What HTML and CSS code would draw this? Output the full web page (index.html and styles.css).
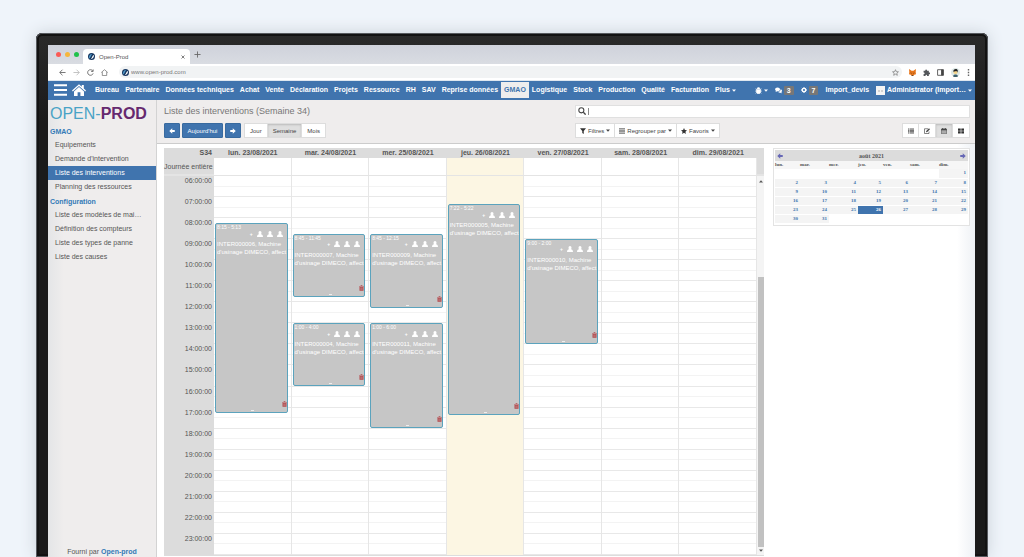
FILE: index.html
```html
<!DOCTYPE html>
<html lang="fr">
<head>
<meta charset="utf-8">
<title>Open-Prod</title>
<link rel="stylesheet" href="styles.css">
</head>
<body>
<svg class="sprite" aria-hidden="true">
  <symbol id="user" viewBox="0 0 12 12"><path d="M6 0a3 3.200 0 0 1 3 3.200c0 1.400-.4 2.500-1 3.200 2.500.6 4 2.200 4 5.600H0c0-3.400 1.500-5 4-5.600-.6-.7-1-1.800-1-3.200A3 3.200 0 0 1 6 0z" fill="currentColor"/></symbol>
  <symbol id="trash" viewBox="0 0 10 12"><path d="M0 2h3l.5-1.500h3L7 2h3v1.200H0zM1 4h8v7.500H1z" fill="currentColor"/><path d="M3.300 5v5M5 5v5M6.700 5v5" stroke="#c6c6c6" stroke-width=".5"/></symbol>
  <symbol id="brand" viewBox="0 0 14 14"><circle cx="7" cy="7" r="7" fill="#17365f"/><path d="M2 11C1 6 4 2 8.500 1.500 6.500 4 6.500 5 5.500 7 4.500 9 3.500 10 2 11z" fill="#4f9ac9"/><path d="M5.200 12.500c4-.5 7-3.500 6.800-8.500-1.500.5-2.500 1.500-3.500 3.500s-1.500 3.500-3.300 5z" fill="#fff"/></symbol>
  <symbol id="left" viewBox="0 0 12 12"><path d="M6.500 .5v3.500H11.500v4H6.500v3.500L.5 6z" fill="currentColor"/></symbol>
  <symbol id="right" viewBox="0 0 12 12"><path d="M5.500 .5v3.500H.5v4h5v3.500L11.500 6z" fill="currentColor"/></symbol>
  <symbol id="caret" viewBox="0 0 8 5"><path d="M0 .5h8L4 4.800z" fill="currentColor"/></symbol>
</svg>

<div class="monitor">
<div class="screen">
  <div class="tabs">
    <span class="dot dot-red"></span><span class="dot dot-yellow"></span><span class="dot dot-green"></span>
    <div class="tab"><svg class="i7"><use href="#brand"/></svg><span>Open-Prod</span>
      <svg class="close" viewBox="0 0 8 8"><path d="M1 1l6 6M7 1L1 7" stroke="#555" stroke-width="1.500"/></svg></div>
    <svg class="i7" viewBox="0 0 8 8"><path d="M4 .5v7M.5 4h7" stroke="#666" stroke-width="1"/></svg>
  </div>
  <div class="address">
    <svg class="i7" viewBox="0 0 8 8"><path d="M7.500 4H1M4 .8L.8 4 4 7.200" fill="none" stroke="#666"/></svg>
    <svg class="i7" viewBox="0 0 8 8"><path d="M.5 4H7M4 .8L7.200 4 4 7.200" fill="none" stroke="#bbb"/></svg>
    <svg class="i7" viewBox="0 0 8 8"><path d="M6.600 2.200A3.200 3.200 0 1 0 7 5M7 .5v2.300H4.700" fill="none" stroke="#666"/></svg>
    <svg class="i7" viewBox="0 0 8 8"><path d="M.3 4L4 .8 7.700 4M1.500 3.500v4h5v-4" fill="none" stroke="#777" stroke-width=".9"/></svg>
    <label class="url"><svg class="i7"><use href="#brand"/></svg><input type="text" value="www.open-prod.com" aria-label="Adresse">
      <svg class="i7" viewBox="0 0 10 10"><path d="M5 1l1.200 2.800 3 .2-2.300 2 .7 3L5 7.400 2.400 9l.7-3L.8 4l3-.2z" fill="none" stroke="#777"/></svg></label>
    <svg class="i7" viewBox="0 0 12 12"><path d="M0 0l4.500 3h3L12 0l-.5 5 .5 4-3 1-1 1.500H4L3 10 0 9l.5-4z" fill="#e8761b"/><path d="M2.500 6l2 1-.5 1.200zM9.500 6l-2 1 .5 1.200zM4.500 10.300h3l-.5 1.200H5z" fill="#35302c"/></svg>
    <svg class="i7" viewBox="0 0 12 12"><path d="M1 3h3C3 .2 7.600.2 6.800 3H10v3c3-.8 3 3.800 0 3v3H7c.6-2.600-3.200-2.600-2.700 0H1V8.500c2.600.5 2.600-3 0-2.600z" fill="#54575b"/></svg>
    <svg class="i7" viewBox="0 0 12 12"><path d="M1 1.200h10v9.600H1z" fill="none" stroke="#444" stroke-width="1.400"/><path d="M7 1h4v10H7z" fill="#444"/></svg>
    <svg class="i9" viewBox="0 0 14 14"><circle cx="7" cy="7" r="7" fill="#dce8e6"/><path d="M3 13c1-4 7-4 8 0-2 1.500-6 1.500-8 0z" fill="#3c5f6c"/><circle cx="7" cy="6.500" r="3" fill="#f3d48a"/><path d="M3.500 6C3 1.500 9 0 10.500 3.500L10 7 8.500 4.500z" fill="#222"/></svg>
    <svg class="kebab" viewBox="0 0 4 10"><path d="M1 0h2v2H1zM1 4h2v2H1zM1 8h2v2H1z" fill="#666"/></svg>
  </div>

  <nav class="navbar">
    <svg class="burger" viewBox="0 0 13 12"><path d="M0 1.300h13M0 6h13M0 10.700h13" stroke="#fff" stroke-width="2"/></svg>
    <svg class="home" viewBox="0 0 14 12"><path d="M7 .3l2.800 2.500V1h2v3.600L14 6.500l-.8.9L7 2 .8 7.400 0 6.500z" fill="#fff"/><path d="M7 3l5 4.400V12H8.400V8.300H5.600V12H2V7.400z" fill="#fff"/></svg>
    <div class="menu">
      <a href="#">Bureau</a><a href="#">Partenaire</a><a href="#">Données techniques</a><a href="#">Achat</a><a href="#">Vente</a><a href="#">Déclaration</a><a href="#">Projets</a><a href="#">Ressource</a><a href="#">RH</a><a href="#">SAV</a><a href="#">Reprise données</a><a href="#" class="current">GMAO</a><a href="#">Logistique</a><a href="#">Stock</a><a href="#">Production</a><a href="#">Qualité</a><a href="#">Facturation</a><a href="#">Plus <svg class="caret"><use href="#caret"/></svg></a>
    </div>
    <div class="account">
      <a href="#" aria-label="Debug"><svg class="i7" viewBox="0 0 12 12"><path d="M3.500 3.500a2.500 2.500 0 0 1 5 0M2.500 4.200h7V9c-1 3.500-6 3.500-7 0zM0 7h12M.8 3l2 1.500M11.200 3l-2 1.500M1 11l2-1.500M11 11L9 9.500" fill="#fff" stroke="#fff"/></svg> <svg class="caret"><use href="#caret"/></svg></a>
      <a href="#"><svg class="i7" viewBox="0 0 14 12"><path d="M5 0c3 0 5 1.600 5 3.800S8 7.500 5 7.500L1 9l1-2.300C-1.500 4.500.5 0 5 0z" fill="#fff"/><path d="M11 3.500c3.500 1 3.800 4 1.700 5.500l1 2.500-3.400-1.200c-2 .3-4-.3-4.800-1.600 3.500 0 5.800-2 5.500-5.200z" fill="#fff"/></svg><span class="badge">3</span></a>
      <a href="#"><svg class="i6" viewBox="0 0 12 12"><circle cx="6" cy="6" r="3.400" fill="none" stroke="#fff" stroke-width="2.600"/><path d="M6 0v2M6 10v2M0 6h2M10 6h2M1.800 1.800l1.400 1.400M8.800 8.800l1.400 1.400M1.800 10.200l1.400-1.400M8.800 3.200l1.400-1.400" stroke="#fff" stroke-width="2"/></svg><span class="badge">7</span></a>
      <a href="#">Import_devis</a>
      <a href="#"><svg class="i9" viewBox="0 0 9 9"><path d="M0 0h9v9H0z" fill="#f4f4f4"/><path d="M2 4h2v2H2zM5 4h2v2H5z" fill="#d2d2d2"/></svg>Administrator (Import… <svg class="caret"><use href="#caret"/></svg></a>
    </div>
  </nav>

  <div class="body">
    <aside class="sidebar">
      <div class="logo">OPEN-<b>PROD</b></div>
      <h2>GMAO</h2>
      <ul><li><a href="#">Equipements</a></li><li><a href="#">Demande d'intervention</a></li><li><a href="#" class="active">Liste des interventions</a></li><li><a href="#">Planning des ressources</a></li></ul>
      <h2>Configuration</h2>
      <ul><li><a href="#">Liste des modèles de mai…</a></li><li><a href="#">Définition des compteurs</a></li><li><a href="#">Liste des types de panne</a></li><li><a href="#">Liste des causes</a></li></ul>
      <p class="credit">Fourni par <a href="#">Open-prod</a></p>
    </aside>

    <main class="main">
      <header class="control">
        <h1>Liste des interventions (Semaine 34)</h1>
        <label class="search"><svg class="i9" viewBox="0 0 12 12"><circle cx="5" cy="5" r="3.800" fill="none" stroke="#444" stroke-width="1.600"/><path d="M8 8l3.500 3.500" stroke="#444" stroke-width="2"/></svg><span class="cursor"></span><input type="text" aria-label="Rechercher"></label>
        <div class="left-tools">
          <button class="primary" aria-label="Précédent"><svg class="i6"><use href="#left"/></svg></button>
          <button class="primary today-btn">Aujourd'hui</button>
          <button class="primary" aria-label="Suivant"><svg class="i6"><use href="#right"/></svg></button>
          <div class="group scale"><button>Jour</button><button class="on">Semaine</button><button>Mois</button></div>
        </div>
        <div class="right-tools">
          <div class="group">
            <button><svg class="i6" viewBox="0 0 12 12"><path d="M0 .5h12L7.500 6v6l-3-2V6z" fill="#333"/></svg>Filtres<svg class="caret"><use href="#caret"/></svg></button>
            <button><svg class="i6" viewBox="0 0 12 12"><path d="M0 1.500h12M0 4.500h12M0 7.500h12M0 10.500h12" stroke="#444" stroke-width="1.500"/></svg>Regrouper par<svg class="caret"><use href="#caret"/></svg></button>
            <button><svg class="i6" viewBox="0 0 12 12"><path d="M6 0l1.800 4 4.200.5-3.100 3 .8 4.300L6 9.700l-3.700 2.100.8-4.300L0 4.500 4.200 4z" fill="#333"/></svg>Favoris<svg class="caret"><use href="#caret"/></svg></button>
          </div>
          <div class="group views">
            <button aria-label="Liste"><svg class="i6" viewBox="0 0 12 12"><path d="M0 2h2M0 4.700h2M0 7.400h2M0 10h2M3 2h9M3 4.700h9M3 7.400h9M3 10h9" stroke="#333" stroke-width="1.600"/></svg></button>
            <button aria-label="Formulaire"><svg class="i6" viewBox="0 0 12 12"><path d="M8 1.500H1v9.500h9V7" fill="none" stroke="#444" stroke-width="1.300"/><path d="M4 8.500l.5-2.500L10 .5 12 2.500 6.500 8z" fill="#444"/></svg></button>
            <button class="on" aria-label="Calendrier"><svg class="i6" viewBox="0 0 12 12"><path d="M.7 2h10.600v9.500H.7z" fill="none" stroke="#444" stroke-width="1.300"/><path d="M.7 2h10.600v3H.7zM2.500 0h2v2h-2zM7.500 0h2v2h-2z" fill="#444"/><path d="M1 7h10M1 9.200h10M4 5v6M8 5v6" stroke="#777" stroke-width=".8"/></svg></button>
            <button aria-label="Kanban"><svg class="i6" viewBox="0 0 12 12"><path d="M0 1h5.400v4.600H0zM6.600 1H12v4.600H6.600zM0 6.600h5.400v4.600H0zM6.600 6.600H12v4.600H6.600z" fill="#333"/></svg></button>
          </div>
        </div>
      </header>

      <div class="content">
        <section class="calendar">
          <div class="heads"><span class="week">S34</span><span>lun. 23/08/2021</span><span>mar. 24/08/2021</span><span>mer. 25/08/2021</span><span>jeu. 26/08/2021</span><span>ven. 27/08/2021</span><span>sam. 28/08/2021</span><span>dim. 29/08/2021</span></div>
          <div class="allday"><span class="week">Journée entière</span><i></i><i></i><i></i><i class="today"></i><i></i><i></i><i></i></div>
          <div class="scroller">
            <div class="hours"><span>06:00:00</span><span>07:00:00</span><span>08:00:00</span><span>09:00:00</span><span>10:00:00</span><span>11:00:00</span><span>12:00:00</span><span>13:00:00</span><span>14:00:00</span><span>15:00:00</span><span>16:00:00</span><span>17:00:00</span><span>18:00:00</span><span>19:00:00</span><span>20:00:00</span><span>21:00:00</span><span>22:00:00</span><span>23:00:00</span></div>
            <div class="lines"><i></i><i></i><i></i><i></i><i></i><i></i><i></i><i></i><i></i><i></i><i></i><i></i><i></i><i></i><i></i><i></i><i></i><i></i></div>
            <div class="days">
              <div class="day">
                <article class="event" style="top:12.5%;height:50%"><time>8:15 - 5:13</time><div class="who"><b>+</b><svg><use href="#user"/></svg><svg><use href="#user"/></svg><svg><use href="#user"/></svg></div><p>INTER000006, Machine d'usinage DIMECO, affect</p><svg class="trash"><use href="#trash"/></svg><span class="grip"></span></article>
              </div>
              <div class="day">
                <article class="event" style="top:15.3%;height:16.6%"><time>8:45 - 11:45</time><div class="who"><b>+</b><svg><use href="#user"/></svg><svg><use href="#user"/></svg><svg><use href="#user"/></svg></div><p>INTER000007, Machine d'usinage DIMECO, affect</p><svg class="trash"><use href="#trash"/></svg><span class="grip"></span></article>
                <article class="event" style="top:38.8%;height:16.6%"><time>1:00 - 4:00</time><div class="who"><b>+</b><svg><use href="#user"/></svg><svg><use href="#user"/></svg><svg><use href="#user"/></svg></div><p>INTER000004, Machine d'usinage DIMECO, affect</p><svg class="trash"><use href="#trash"/></svg><span class="grip"></span></article>
              </div>
              <div class="day">
                <article class="event" style="top:15.3%;height:19.4%"><time>8:45 - 12:15</time><div class="who"><b>+</b><svg><use href="#user"/></svg><svg><use href="#user"/></svg><svg><use href="#user"/></svg></div><p>INTER000009, Machine d'usinage DIMECO, affect</p><svg class="trash"><use href="#trash"/></svg><span class="grip"></span></article>
                <article class="event" style="top:38.8%;height:27.8%"><time>1:00 - 6:00</time><div class="who"><b>+</b><svg><use href="#user"/></svg><svg><use href="#user"/></svg><svg><use href="#user"/></svg></div><p>INTER000011, Machine d'usinage DIMECO, affect</p><svg class="trash"><use href="#trash"/></svg><span class="grip"></span></article>
              </div>
              <div class="day today">
                <article class="event" style="top:7.5%;height:55.5%"><time>7:22 - 5:22</time><div class="who"><b>+</b><svg><use href="#user"/></svg><svg><use href="#user"/></svg><svg><use href="#user"/></svg></div><p>INTER000005, Machine d'usinage DIMECO, affect</p><svg class="trash"><use href="#trash"/></svg><span class="grip"></span></article>
              </div>
              <div class="day">
                <article class="event" style="top:16.6%;height:27.8%"><time>9:00 - 2:00</time><div class="who"><b>+</b><svg><use href="#user"/></svg><svg><use href="#user"/></svg><svg><use href="#user"/></svg></div><p>INTER000010, Machine d'usinage DIMECO, affect</p><svg class="trash"><use href="#trash"/></svg><span class="grip"></span></article>
              </div>
              <div class="day"></div>
              <div class="day"></div>
            </div>
            <div class="scrollbar"><svg class="caret up"><use href="#caret"/></svg><span class="track"></span><span class="thumb"></span><svg class="caret"><use href="#caret"/></svg></div>
          </div>
        </section>

        <aside class="mini">
          <div class="mini-head"><svg class="i6"><use href="#left"/></svg><strong>août 2021</strong><svg class="i6"><use href="#right"/></svg></div>
          <table>
            <colgroup><col class="narrow"><col class="wide"><col class="wide"><col class="narrow"><col class="mid"><col class="wide"><col class="wide"></colgroup>
            <thead><tr><th>lun.</th><th>mar.</th><th>mer.</th><th>jeu.</th><th>ven.</th><th>sam.</th><th>dim.</th></tr></thead>
            <tbody>
              <tr><td></td><td></td><td></td><td></td><td></td><td></td><td class="d">1</td></tr>
              <tr><td class="d">2</td><td class="d">3</td><td class="d">4</td><td class="d">5</td><td class="d">6</td><td class="d">7</td><td class="d">8</td></tr>
              <tr><td class="d">9</td><td class="d">10</td><td class="d">11</td><td class="d">12</td><td class="d">13</td><td class="d">14</td><td class="d">15</td></tr>
              <tr><td class="d">16</td><td class="d">17</td><td class="d">18</td><td class="d">19</td><td class="d">20</td><td class="d">21</td><td class="d">22</td></tr>
              <tr><td class="d">23</td><td class="d">24</td><td class="d">25</td><td class="d sel">26</td><td class="d">27</td><td class="d">28</td><td class="d">29</td></tr>
              <tr><td class="d">30</td><td class="d">31</td><td></td><td></td><td></td><td></td><td></td></tr>
            </tbody>
          </table>
        </aside>
      </div>
    </main>
  </div>
</div>
</div>
</body>
</html>
```

FILE: styles.css
```css
* { box-sizing: border-box; }
body {
  margin: 0;
  min-height: 100vh;
  display: flex;
  padding: 33px 36px 0;
  background: #eff4fa;
  font: 7px/10px "Liberation Sans", Arial, sans-serif;
  color: #555;
  overflow: hidden;
}
a { color: inherit; text-decoration: none; }
button, input { font: inherit; color: inherit; margin: 0; }
h1, h2, p, ul { margin: 0; padding: 0; }
ul { list-style: none; }
svg { flex: none; }
.sprite { display: none; }
.i6 { width: 6px; height: 6px; }
.i7 { width: 7px; height: 7px; }
.i9 { width: 9px; height: 9px; }
.caret { width: 4px; height: 3px; }

.monitor {
  flex: 1;
  min-width: 0;
  display: flex;
  padding: 12px 13px 0 12px;
  background: linear-gradient(#2a2a2a, #1a1a1a 90px);
  border-radius: 6px 6px 0 0;
  box-shadow: inset 0 0 0 1px #56595e, inset 0 0 0 3px #121212, 0 0 16px #c9d0d8;
}
.screen { flex: 1; min-width: 0; display: flex; flex-direction: column; background: #fff; }

/* Browser chrome */
.tabs { display: flex; align-items: center; height: 19px; padding-left: 8px; gap: 4px; background: linear-gradient(#cfd2db, #d9dce2); }
.dot { width: 5px; height: 5px; border-radius: 50%; }
.dot-red { background: #fb5a55; }
.dot-yellow { background: #f6b73c; }
.dot-green { background: #20c14b; }
.tab { align-self: flex-end; display: flex; align-items: center; gap: 4px; width: 107px; height: 15px; padding: 0 5px; background: #fff; border-radius: 4px 4px 0 0; font-size: 6px; }
.close { width: 4px; height: 4px; margin-left: auto; }
.address { display: flex; align-items: center; height: 17px; padding: 0 5px 0 11px; gap: 7px; background: #fff; border-bottom: 1px solid #dfe7ef; }
.url { flex: 1; display: flex; align-items: center; gap: 2px; height: 12px; margin-left: 4px; padding: 0 3px; border-radius: 6px; background: #f1f3f4; font-size: 6px; }
.url input { flex: 1; min-width: 0; padding: 0; border: 0; background: none; color: #777; }
.kebab { width: 3px; height: 7px; }

/* Navigation */
.navbar { display: flex; align-items: center; height: 19px; padding: 0 3px 1px 6px; background: #4074ae; color: #fff; font-weight: bold; white-space: nowrap; }
.burger { width: 13px; height: 12px; margin-right: 5px; }
.home { width: 14px; height: 12px; margin-right: 6px; }
.menu { display: flex; }
.menu a { padding: 3px; line-height: 10px; }
.menu .current { background: #eeeded; color: #4074ae; }
.account { display: flex; align-items: center; gap: 7px; margin-left: auto; }
.account a { display: flex; align-items: center; gap: 2px; }
.badge { padding: 0 3px; background: #777; border-radius: 1px; line-height: 9px; }

.body { flex: 1; display: flex; }
.sidebar { flex: none; width: 109px; display: flex; flex-direction: column; background: linear-gradient(90deg, #e4e5e7, #efeded 16px); border-right: 1px solid #d3d3d3; white-space: nowrap; }
.logo { padding: 5px 0 3px 2px; font-size: 16px; line-height: 18px; color: #4aa3c6; }
.logo b { color: #66296f; }
.sidebar h2 { padding-left: 2px; font-size: 7px; line-height: 12px; color: #337ab7; }
.sidebar ul { margin-bottom: 2px; }
.sidebar li a { display: block; padding-left: 7px; line-height: 14px; }
.sidebar li .active { background: #4074ae; color: #fff; }
.credit { margin-top: auto; text-align: center; line-height: 10px; }
.credit a { color: #337ab7; font-weight: bold; }

/* Control panel */
.main { flex: 1; min-width: 0; display: flex; flex-direction: column; }
.control { display: grid; grid-template-columns: 1fr 395px; align-items: center; row-gap: 5px; height: 44px; padding: 4px 5px 5px 7px; background: #efeded; border-bottom: 1px solid #ccc; }
h1 { font-size: 9px; line-height: 14px; font-weight: normal; color: #777; }
.search { display: flex; align-items: center; height: 13px; padding: 0 2px; gap: 2px; background: #fff; border: 1px solid #e0e0e0; }
.search .i9 { width: 8px; height: 8px; }
.cursor { width: 1px; height: 7px; background: #888; }
.search input { flex: 1; min-width: 0; border: 0; padding: 0; background: none; }
.left-tools, .right-tools { display: flex; gap: 2px; }
.right-tools { justify-content: space-between; }
button { display: flex; align-items: center; justify-content: center; gap: 2px; height: 15px; padding: 0 4px; background: #fff; border: 1px solid #ddd; white-space: nowrap; font-size: 6px; color: #444; }
.primary { background: #4074ae; border-color: #386a9f; border-radius: 1px; color: #fff; width: 16px; }
.today-btn { width: 41px; }
.group { display: flex; }
.group button + button { border-left: 0; }
.scale { margin-left: 1px; }
.scale button { padding: 0 5px; }
.group .on { background: #dfdfdf; box-shadow: inset 0 1px 2px #bbb; }
.views button { width: 17px; }

/* Week calendar */
.content { flex: 1; display: flex; gap: 9px; padding: 4px 5px 1px 7px; background: linear-gradient(270deg, #eef1f5, #fff 18px); }
.calendar { flex: 1; min-width: 0; display: flex; flex-direction: column; }
.heads, .allday { display: grid; grid-template-columns: 50px repeat(7, 1fr); padding-right: 7px; background: #dcdcdc; white-space: nowrap; }
.heads { font-weight: bold; text-align: center; line-height: 10px; }
.heads .week { text-align: right; padding-right: 2px; }
.allday { height: 18px; line-height: 17px; border-bottom: 2px solid #e4e4e4; }
.allday .week { text-align: right; padding-right: 2px; }
.allday i { background: #fff; border-right: 1px solid #e6e6e6; }
.allday .today { background: #fcf6e3; }
.scroller { flex: 1; display: grid; grid-template-columns: 50px 1fr 7px; border-bottom: 1px solid #ddd; }
.hours, .lines { display: grid; grid-template-rows: repeat(18, 1fr); grid-row: 1; }
.hours { grid-column: 1; background: #dcdcdc; text-align: right; padding-right: 2px; }
.lines { grid-column: 2; }
.lines i { border-bottom: 1px solid #e8e8e8; background: linear-gradient(#f3f3f3, #f3f3f3) 0 50% / 100% 1px no-repeat; }
.days { grid-column: 2; grid-row: 1; display: grid; grid-template-columns: repeat(7, 1fr); }
.day { position: relative; border-right: 1px solid #e6e6e6; }
.day.today { background: #fcf6e3; }
.event { position: absolute; left: 1px; right: 3px; overflow: hidden; background: #c6c6c6; border: 1px solid #5ba3bd; border-radius: 2px; color: #fff; font-size: 6px; line-height: 8px; }
.event time { display: block; padding-left: 1px; font-size: 5px; line-height: 6px; }
.who { display: flex; justify-content: flex-end; align-items: center; gap: 4px; height: 7px; margin-right: 4px; }
.who svg { width: 6px; height: 6px; }
.who b { font-size: 5px; line-height: 6px; }
.event p { padding: 3px 0 0 1px; margin-right: -2px; }
.trash { position: absolute; right: 0; bottom: 5px; width: 5px; height: 6px; color: #b5484c; }
.grip { position: absolute; left: 50%; bottom: 1px; width: 3px; height: 1px; background: #eee; }
.scrollbar { grid-column: 3; grid-row: 1; display: flex; flex-direction: column; align-items: center; padding: 4px 0 3px; background: #f4f4f4; }
.up { transform: rotate(180deg); }
.track { flex: 94; }
.thumb { flex: 271; width: 6px; margin-bottom: 2px; background: #c1c1c1; }

/* Month picker */
.mini { flex: none; align-self: flex-start; width: 197px; padding: 1px; border: 1px solid #e3e3e3; font-family: "Liberation Serif", "Times New Roman", serif; font-size: 5px; background: #fff; }
.mini-head { display: flex; align-items: center; justify-content: space-between; height: 11px; padding: 0 2px; background: #dcdcdc; font-size: 6px; }
.mini-head svg { color: #6667b5; }
.mini table { width: 100%; table-layout: fixed; border-collapse: collapse; }
.narrow { width: 25px; }
.mid { width: 27px; }
.wide { width: 29px; }
.mini th { padding: 0; text-align: left; line-height: 8px; font-size: 5px; background: #f6f6f6; }
.mini td { height: 9px; padding: 0 2px 0 0; text-align: right; line-height: 8px; border-bottom: 1px solid #fff; font-weight: bold; }
.mini .d { background: #f4f4f4; color: #4074ae; }
.mini .sel { background: #4074ae; color: #fff; }
```
